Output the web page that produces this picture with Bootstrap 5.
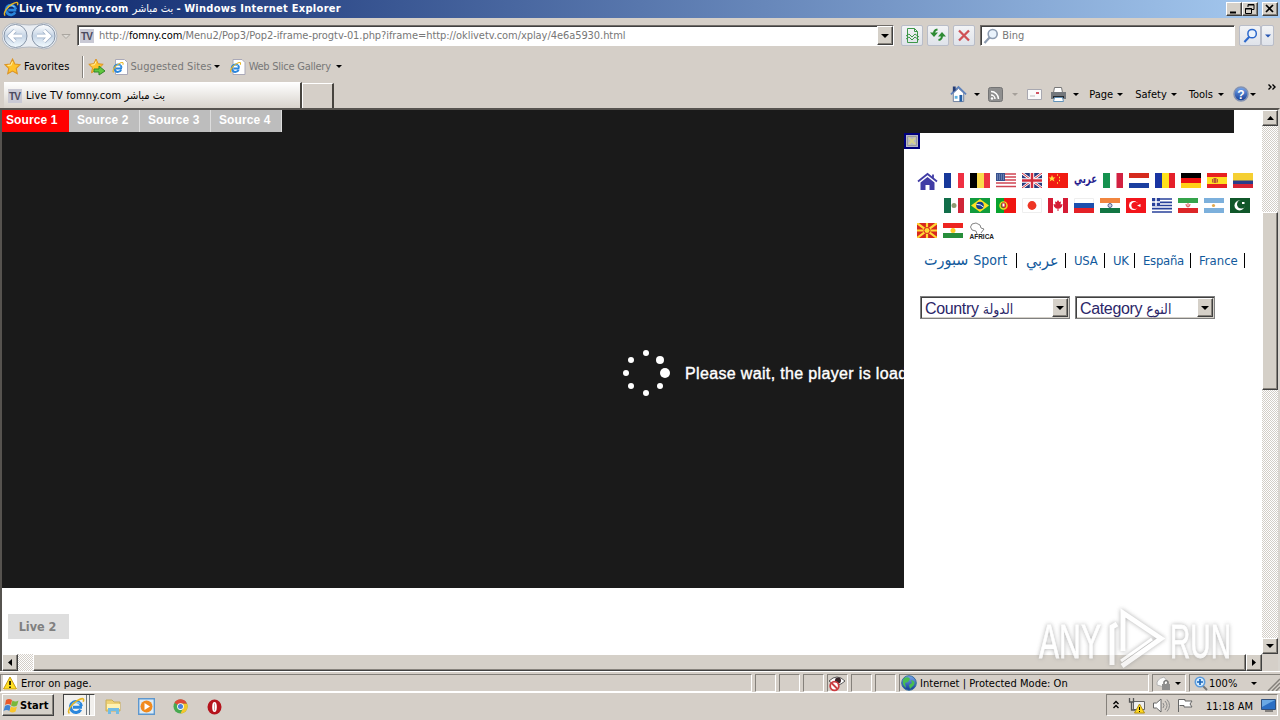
<!DOCTYPE html>
<html lang="en">
<head>
  <meta charset="UTF-8" />
  <title>Live TV fomny.com</title>
  <link href="https://cdn.jsdelivr.net/npm/bootstrap@5.3.0/dist/css/bootstrap.min.css" rel="stylesheet" />
  <style>
    body {
      width: 1280px;
      height: 720px;
      overflow: hidden;
      background-color: #d5cfc8;
      color: #000;
      font-family: "DejaVu Sans Condensed", "DejaVu Sans", sans-serif;
      font-stretch: condensed;
      font-size: 11px;
      line-height: 14px;
      white-space: nowrap;
    }
    svg { flex: none; display: block; }
    .defs { position: absolute; }

    /* title bar */
    .titlebar {
      height: 18px;
      background: linear-gradient(90deg, #0a246a, #a6caf0);
      color: #fff;
      padding: 0 2px 0 3px;
    }
    .title-text { font-weight: bold; letter-spacing: 0.29px; }
    .title-text span { font-weight: normal; }
    .raised {
      background-color: #d5d0c8;
      border: 1px solid;
      border-color: #fff #404040 #404040 #fff;
      box-shadow: inset -1px -1px 0 #87837c;
      color: #000;
    }
    .win-btn { width: 16px; height: 14px; }

    /* address row */
    .nav-row { height: 35px; padding: 0 6px 0 2px; }
    .sunken {
      background-color: #fff;
      border: 1px solid;
      border-color: #706c68 #fff #fff #706c68;
      box-shadow: inset 1px 1px 0 #404040;
    }
    .address { width: 818px; height: 21px; color: #777; }
    .url { letter-spacing: -0.065px; padding-left: 1px; padding-top: 1px; }
    .url b { font-weight: normal; color: #000; }
    .nav-btn {
      width: 22px;
      height: 21px;
      background: linear-gradient(#f2f3f5, #dfe3ea);
      border: 1px solid #b9bdc8;
      border-radius: 2px;
    }
    .bing { width: 255px; height: 21px; color: #777; }
    .fav-row { height: 26px; padding: 1px 0 0 4px; }
    .fav-row .dim { color: #777; letter-spacing: 0.08px; }
    .fav-row .slices { letter-spacing: -0.25px; }
    .sep { width: 2px; height: 22px; border-left: 1px solid #85817b; border-right: 1px solid #fff; }

    /* tabs and command bar */
    .tab-row { height: 29px; padding-left: 4px; }
    .page-tab {
      width: 298px;
      height: 26px;
      background: linear-gradient(#fefefe, #d8d3cc);
      border-right: 2px solid #47443f;
      border-top: 1px solid #fff;
      padding-left: 4px;
    }
    .page-tab span { padding-top: 1px; letter-spacing: 0.11px; }
    .new-tab { width: 32px; height: 25px; border: 1px solid #fff; border-right: 2px solid #47443f; border-bottom: 0; }
    .cmd { height: 28px; }
    .cmd span { padding-top: 1px; }

    /* viewport */
    .frame { height: 563px; border-top: 2px solid #56534f; border-left: 2px solid #56534f; border-right: 2px solid #d8d4ce; }
    .viewport { width: 1260px; height: 544px; background-color: #fff; position: relative; overflow: hidden; }
    .player { width: 1232px; height: 478px; background-color: #1a1a1a; color: #fff; font-family: "Liberation Sans", sans-serif; }
    .source {
      height: 22px;
      width: 71px;
      background-color: #bdbdbd;
      border-right: 1px solid #ddd;
      font: bold 12px/20px "Liberation Sans", sans-serif;
      letter-spacing: 0.1px;
      padding-left: 8px;
    }
    .source.on { width: 67px; background-color: #f00; padding-left: 4px; border: 0; }
    .wait { padding: 216px 0 0 619px; font-size: 16px; letter-spacing: 0.35px; -webkit-text-stroke: 0.4px #fff; }
    .wait span { padding: 2px 0 0 14px; }
    .live-btn { width: 61px; height: 25px; margin: 26px 0 0 6px; background-color: #dedede; color: #808080; font: bold 12.5px/25px "DejaVu Sans Condensed", sans-serif; padding-right: 2px; }
    .side-panel { position: absolute; left: 902px; top: 23px; width: 358px; height: 521px; background-color: #fff; }
    .close-box { width: 16px; height: 16px; border: 2px solid #00007c; background-color: #b7b7c3; }
    .flags { gap: 6px; height: 25px; }
    .links { height: 22px; color: #125a9c; font-size: 13px; letter-spacing: -0.3px; }
    .links i { width: 1px; height: 15px; background-color: #000; }
    .links a { color: #125a9c; text-decoration: none; padding-top: 1px; }
    .links .sport { width: 92px; font-size: 14px; letter-spacing: 0; word-spacing: 1px; padding-top: 0; }
    .links .sport span { font-size: 16px; }
    .links .arabic { width: 48px; padding-left: 9px; font-size: 16px; }
    .pick {
      height: 23px;
      border: 1px solid #808080;
      box-shadow: inset 1px 1px 0 #404040, inset -1px -1px 0 #d4d0c8;
      color: #2b2668;
      font: 16px/21px "Liberation Sans", "DejaVu Sans", sans-serif;
      padding: 1px 1px 1px 4px;
      letter-spacing: -0.35px;
    }
    .pick span { font-family: "DejaVu Sans Condensed", sans-serif; font-size: 14px; line-height: 1; }
    .track { background: repeating-conic-gradient(#fff 0 25%, #d3cec7 0 50%) 0 0 / 2px 2px; }
    .vscroll { width: 16px; }
    .hscroll { height: 17px; }

    /* status bar */
    .status { height: 21px; gap: 3px; padding-top: 2px; border-top: 1px solid #fff; }
    .pane { height: 18px; width: 21px; border: 1px solid; border-color: #85817b #fff #fff #85817b; flex: none; }
    .pane span { padding-top: 1px; }
    .zone { letter-spacing: 0.03px; }

    /* taskbar */
    .taskbar { height: 27px; border-top: 1px solid #fff; padding: 1px 2px 0; }
    .start { width: 52px; height: 22px; font-weight: bold; letter-spacing: 0.1px; }
    .start span { padding-top: 2px; }
    .quick { width: 32px; height: 22px; background-color: #f2f0ed; border: 1px solid; border-color: #404040 #fff #fff #404040; }
    .tray { width: 172px; height: 22px; border: 1px solid; border-color: #85817b #fff #fff #85817b; }
    .clock { margin-left: 12px; padding-top: 3px; }
    .watermark { position: absolute; left: 1030px; top: 604px; filter: drop-shadow(0 0 2px #999); opacity: .8; }
  </style>
</head>
<body class="d-flex flex-column">
  <svg class="defs" width="0" height="0">
    <defs>
      <linearGradient id="round" x2="0" y2="1"><stop stop-color="#fff" /><stop offset=".5" stop-color="#c6d5e6" /><stop offset="1" stop-color="#f3fbff" /></linearGradient>
      <linearGradient id="blue" x2="0" y2="1"><stop stop-color="#79a8ee" /><stop offset="1" stop-color="#123a94" /></linearGradient>
      <symbol id="ie" viewBox="0 0 16 16">
        <path d="M13.3 9.2H5.2M12.8 8.2A4.9 4.9 0 1 0 12.2 11.4" fill="none" stroke="#2a86dc" stroke-width="2.7" />
        <path d="M4.500 6.800A4.500 4.500 0 0 1 11.500 6" fill="none" stroke="#7fcbf8" stroke-width="1.200" />
        <path d="M2.2 14.6C-.4 12.5 4 6 9 3.2S15.6 1 14.4 4.3" fill="none" stroke="#e7b521" stroke-width="1.4" />
      </symbol>
      <symbol id="iepage" viewBox="0 0 16 16">
        <path d="M3.5.5h9l3 3v12h-12z" fill="#fff" stroke="#aaa9b8" />
        <use href="#ie" x="0" y="2.5" width="12" height="12" />
      </symbol>
      <symbol id="star" viewBox="0 0 16 16"><path d="M8 1l2.2 4.7 5 .6-3.7 3.5 1 5L8 12.3l-4.5 2.5 1-5L.8 6.3l5-.6z" fill="#ffc32c" stroke="#dc9424" /><path d="M8 3.4L6.5 6.7l-3.2.4" fill="none" stroke="#fff0a8" /></symbol>
      <symbol id="down" viewBox="0 0 6 3"><path d="M0 0h6L3 3z" fill="currentColor" /></symbol>
      <symbol id="lens" viewBox="0 0 16 16"><path d="M7 9L1.500 15" stroke="currentColor" stroke-width="2.2" /><circle cx="9.7" cy="6" r="4.5" fill="#eaf3fc" stroke="currentColor" stroke-width="1.6" /></symbol>
      <symbol id="tvicon" viewBox="0 0 14 14"><path d="M0 0h14v14H0z" fill="#c9c9d4" /><text x="7" y="11" text-anchor="middle" font-family="Liberation Sans" font-weight="bold" font-size="10" textLength="12" fill="#4a4a5e">TV</text></symbol>
    </defs>
  </svg>

  <div class="titlebar d-flex align-items-center flex-shrink-0">
    <svg width="16" height="16"><use href="#ie" /></svg>
    <div class="title-text flex-grow-1">Live TV fomny.com <span>بث مباشر</span> - Windows Internet Explorer</div>
    <div class="raised win-btn"><svg width="14" height="12"><path d="M3 9.5h6" stroke="#000" stroke-width="2" /></svg></div>
    <div class="raised win-btn me-1"><svg width="14" height="12"><path d="M5 4V1.5h6v5H9M5 2h6M2.5 5.5h6v5h-6zM2 6h7" fill="none" stroke="#000" /></svg></div>
    <div class="raised win-btn"><svg width="14" height="12"><path d="M3 2l7 7M10 2L3 9" stroke="#000" stroke-width="1.7" /></svg></div>
  </div>

  <div class="nav-row d-flex align-items-center flex-shrink-0">
    <svg width="75" height="30" viewBox="0 0 75 30">
      <path d="M13 2Q27 6 42 2a13 13 0 0 1 0 26Q27 24 13 28a13 13 0 0 1 0-26" fill="#e9edf2" stroke="#b4b9c0" />
      <circle cx="13.5" cy="15" r="11.5" fill="url(#round)" stroke="#8795a8" />
      <circle cx="41.500" cy="15" r="11.5" fill="url(#round)" stroke="#8795a8" />
      <path d="M20 15H8M13 9.500L7.500 15l5.500 5.500M35 15h12M42 9.500l5.500 5.500-5.500 5.500" fill="none" stroke="#9dafc6" stroke-width="4.500" />
      <path d="M20 15H8M13 9.500L7.500 15l5.500 5.500M35 15h12M42 9.500l5.500 5.500-5.500 5.500" fill="none" stroke="#fff" stroke-width="3" />
      <path d="M60 13.500h8l-4 4z" fill="#dedbd6" stroke="#aaa6a0" />
    </svg>
    <div class="sunken address d-flex align-items-center">
      <svg style="margin: 0 4px 0 2px" width="14" height="14"><use href="#tvicon" /></svg>
      <div class="url flex-grow-1">http://<b>fomny.com</b>/Menu2/Pop3/Pop2-iframe-progtv-01.php?iframe=http://oklivetv.com/xplay/4e6a5930.html</div>
      <div class="raised h-100 d-flex align-items-center justify-content-center win-btn"><svg width="8" height="4"><use href="#down" /></svg></div>
    </div>
    <div class="d-flex ms-1" style="gap: 4px; padding-left: 3px">
      <div class="nav-btn"><svg width="20" height="19"><path d="M5.500 2.500h7l3 3v11h-10zM12.500 2.500v3h3M4 10l3-2 3 3 3-3 4 3M4 13l3-2 3 3 3-3 4 3" fill="none" stroke="#3c9748" /></svg></div>
      <div class="nav-btn"><svg width="20" height="19"><path d="M9.500 3.500Q6 4 6 7.500M10.500 14q3.500-.5 3.500-4.500" fill="none" stroke="#2e8b34" stroke-width="2" /><path d="M2 6.500h8L6 11zM10 10.500h8L14 6z" fill="#2e8b34" /></svg></div>
      <div class="nav-btn"><svg width="20" height="19"><path d="M5 4.500l10 10M15 4.500l-10 10" stroke="#cf5156" stroke-width="2.300" /></svg></div>
    </div>
    <div class="sunken bing d-flex align-items-center me-1" style="margin-left: 5px">
      <svg style="margin-left: 2px" width="16" height="16" color="#8d9cb1"><use href="#lens" /></svg>
      <span style="padding: 1px 0 0 3px">Bing</span>
    </div>
    <div class="nav-btn ms-auto d-flex align-items-center justify-content-center"><svg width="15" height="15" color="#2d69cc"><use href="#lens" /></svg></div>
    <div class="nav-btn d-flex align-items-center justify-content-center" style="width: 13px"><svg width="6" height="4" color="#2756b2"><use href="#down" /></svg></div>
  </div>

  <div class="fav-row d-flex align-items-center flex-shrink-0">
    <svg width="17" height="17"><use href="#star" /></svg>
    <span style="margin-left: 3px; letter-spacing: 0.1px">Favorites</span>
    <div class="sep" style="margin: 0 4px 0 12px"></div>
    <svg width="18" height="18" viewBox="0 0 18 18"><use href="#star" width="16" height="16" /><path d="M6 11h5V8l6 5-6 4v-3H6z" fill="#60c83e" stroke="#33872a" /></svg>
    <svg style="margin: 0 3px 0 6px" width="16" height="16"><use href="#iepage" /></svg>
    <span class="dim">Suggested Sites</span>
    <svg style="margin-left: 2px" width="6" height="3"><use href="#down" /></svg>
    <svg style="margin: 0 3px 0 9px" width="17" height="16"><use href="#iepage" /></svg>
    <span class="dim slices">Web Slice Gallery</span>
    <svg style="margin-left: 5px" width="6" height="3"><use href="#down" /></svg>
  </div>

  <div class="tab-row d-flex align-items-end flex-shrink-0">
    <div class="page-tab d-flex align-items-center">
      <svg class="me-1" width="14" height="14"><use href="#tvicon" /></svg>
      <span>Live TV fomny.com بث مباشر</span>
    </div>
    <div class="new-tab"></div>
    <div class="cmd d-flex align-items-center ms-auto">
      <svg width="17" height="18" viewBox="0 0 18 18"><path d="M3.500 8v9h11V8L9 3z" fill="#fff" stroke="#6a7c9c" /><path d="M1 9.500l8-8 8 8" fill="none" stroke="#5c80bb" stroke-width="1.800" /><path d="M3 1h3v4L3 7z" fill="#243c75" /><path d="M10 10h3v7h-3z" fill="#235fa6" /><path d="M5 11h3v3H5z" fill="#5fb1df" /></svg>
      <svg style="margin: 0 8px 0 7px" width="6" height="3"><use href="#down" /></svg>
      <svg width="15" height="15"><rect x=".5" y=".5" width="14" height="14" rx="2" fill="#8f8f8f" stroke="#747474" /><path d="M3 8a4 4 0 0 1 4 4M3 4.500a7.500 7.500 0 0 1 7.500 7.500" fill="none" stroke="#fff" stroke-width="1.500" /><circle cx="4" cy="11.500" r="1.200" fill="#fff" /></svg>
      <svg width="6" height="3" color="#a5a09a" style="margin: 0 9px"><use href="#down" /></svg>
      <svg width="15" height="11"><path d="M.5.5h14v10H.5z" fill="#fafafa" stroke="#a8a8b0" /><path d="M9 3h3v2H9z" fill="#d05463" /><path d="M3 7h5" stroke="#bbb" /></svg>
      <svg style="margin-left: 8px" width="17" height="17"><path d="M4.500 1.500h7l1 5h-9z" fill="#fff" stroke="#777" /><path d="M1 6h15v7H1z" fill="#73777c" /><path d="M3 10h11v2H3z" fill="#252a30" /><path d="M4.500 11.500h8l1 4h-10z" fill="#fff" stroke="#6192b9" /></svg>
      <svg style="margin: 0 10px 0 6px" width="6" height="3"><use href="#down" /></svg>
      <span>Page</span><svg style="margin: 0 12px 0 4px" width="6" height="3"><use href="#down" /></svg>
      <span>Safety</span><svg style="margin: 0 12px 0 4px" width="6" height="3"><use href="#down" /></svg>
      <span>Tools</span><svg style="margin: 0 9px 0 5px" width="6" height="3"><use href="#down" /></svg>
      <svg width="16" height="16"><circle cx="8" cy="8" r="7" fill="url(#blue)" stroke="#8492b1" stroke-width="1.500" /><text x="8" y="12.500" text-anchor="middle" font-family="Liberation Sans" font-size="12" font-weight="bold" fill="#fff">?</text></svg>
      <svg style="margin: 0 12px 0 1px" width="6" height="3"><use href="#down" /></svg>
      <svg class="align-self-start mt-1" width="8" height="7" style="margin-right: 4px"><path d="M.5.500L3 3 .5 5.500M4.500.500L7 3 4.500 5.500" fill="none" stroke="#000" stroke-width="1.400" /></svg>
    </div>
  </div>

  <div class="frame d-flex flex-shrink-0">
    <div>
      <div class="viewport">
        <div class="player">
          <div class="d-flex">
            <div class="source on">Source 1</div>
            <div class="source">Source 2</div>
            <div class="source">Source 3</div>
            <div class="source">Source 4</div>
          </div>
          <div class="wait d-flex align-items-center">
            <svg width="50" height="50" viewBox="0 0 50 50" fill="#fff" stroke="none"><circle cx="25" cy="5" r="3" /><circle cx="39" cy="12" r="4" /><circle cx="44" cy="25" r="5" /><circle cx="39" cy="38" r="3" /><circle cx="25" cy="45" r="3" /><circle cx="10" cy="38" r="3" /><circle cx="5" cy="25" r="3" /><circle cx="10" cy="12" r="3" /></svg>
            <span>Please wait, the player is loading</span>
          </div>
        </div>
        <div class="live-btn text-center">Live 2</div>

        <div class="side-panel">
          <div class="close-box"><svg width="12" height="12"><path d="M1.500 1.500h9v9h-9z" fill="none" stroke="#999" /><path d="M3 3l6 6M9 3L3 9" stroke="#d6d28c" stroke-width="2" /></svg></div>
          <div class="flags d-flex align-items-center" style="margin: 19px 0 0 13px">
            <svg width="21" height="19" viewBox="0 0 21 19"><path d="M3.500 11.500L10.500 6l7 5.500V19h-5v-5h-4v5h-5z" fill="#403ca5" /><path d="M1 10.500L10.500 3 20 10.500M16 3.500v4" fill="none" stroke="#403ca5" stroke-width="1.800" /></svg>
            <svg width="20" height="15"><path d="M0 0h7v15H0z" fill="#17389a" /><path d="M7 0h7v15H7z" fill="#fff" /><path d="M14 0h6v15h-6z" fill="#ef3042" /></svg>
            <svg width="20" height="15"><path d="M0 0h7v15H0z" fill="#000" /><path d="M7 0h7v15H7z" fill="#fadb4c" /><path d="M14 0h6v15h-6z" fill="#ed3340" /></svg>
            <svg width="20" height="15"><path d="M0 0h20v15H0z" fill="#fff" /><path d="M0 1h20M0 4h20M0 7h20M0 10h20M0 13.500h20" stroke="#cf4453" stroke-width="1.500" /><path d="M0 0h9v8H0z" fill="#37518e" /><path d="M1 2h7M1 4h7M1 6h7" stroke="#9aabd0" stroke-dasharray="1 1" /></svg>
            <svg width="20" height="15"><path d="M0 0h20v15H0z" fill="#273a7c" /><path d="M0 0l20 15M20 0L0 15" stroke="#fff" stroke-width="2.600" /><path d="M0 0l20 15M20 0L0 15" stroke="#d12d3c" /><path d="M10 0v15M0 7.500h20" stroke="#fff" stroke-width="4.400" /><path d="M10 0v15M0 7.500h20" stroke="#d12d3c" stroke-width="2.500" /></svg>
            <svg width="20" height="15"><path d="M0 0h20v15H0z" fill="#f11b12" /><path d="M4 2l1 2.500h2.500l-2 1.500 1 2.500L4 7 1.500 8.500l1-2.500-2-1.500H3z" fill="#ffe03c" /><path d="M9 2h1M11 4.500h1M11 7.500h1M9 10h1" stroke="#ffe03c" stroke-width="1.500" /></svg>
            <svg class="overflow-visible" width="23" height="21" viewBox="0 0 23 21"><text x="11.500" y="13" text-anchor="middle" font-family="DejaVu Sans" font-size="13" font-weight="bold" textLength="23" lengthAdjust="spacingAndGlyphs" fill="#271d8e">عربي</text></svg>
            <svg width="20" height="15"><path d="M0 0h7v15H0z" fill="#15924f" /><path d="M7 0h7v15H7z" fill="#fff" /><path d="M13.500 0H20v15h-6.500z" fill="#d22141" /></svg>
            <svg width="20" height="15"><path d="M0 0h20v5H0z" fill="#d52b1e" /><path d="M0 5h20v5H0z" fill="#fff" /><path d="M0 10h20v5H0z" fill="#1b3fa0" /></svg>
            <svg width="20" height="15"><path d="M0 0h7v15H0z" fill="#1934a2" /><path d="M7 0h7v15H7z" fill="#ffe21b" /><path d="M14 0h6v15h-6z" fill="#e5202a" /></svg>
            <svg width="20" height="15"><path d="M0 0h20v5H0z" fill="#000" /><path d="M0 5h20v5H0z" fill="#ed1111" /><path d="M0 10h20v5H0z" fill="#ffd117" /></svg>
            <svg width="20" height="15"><path d="M0 0h20v15H0z" fill="#e82220" /><path d="M0 4h20v7H0z" fill="#ffdf21" /><path d="M5 6h1v3.500H5zM6.500 5h3v5h-3zM10 6h1v3.500h-1z" fill="#b75835" /></svg>
            <svg width="20" height="15"><path d="M0 0h20v8H0z" fill="#f5cf32" /><path d="M0 7.500h20v4H0z" fill="#283c8b" /><path d="M0 11h20v4H0z" fill="#d52334" /></svg>
          </div>
          <div class="flags d-flex align-items-center" style="margin-left: 40px">
            <svg width="20" height="15"><path d="M0 0h7v15H0z" fill="#116e4a" /><path d="M7 0h7v15H7z" fill="#fff" /><path d="M14 0h6v15h-6z" fill="#cf2538" /><circle cx="10" cy="7.500" r="2.500" fill="#8e9a72" /></svg>
            <svg width="20" height="15"><path d="M0 0h20v15H0z" fill="#119b3d" /><path d="M10 1l9 6.500-9 6.500-9-6.500z" fill="#fde323" /><circle cx="10" cy="7.500" r="3.800" fill="#153e91" /><path d="M6.500 6.500q4-.5 7 2.500" stroke="#fff" fill="none" /></svg>
            <svg width="20" height="15"><path d="M0 0h8v15H0z" fill="#08a32e" /><path d="M8 0h12v15H8z" fill="#f01611" /><circle cx="7.500" cy="7.500" r="3.500" fill="none" stroke="#eadd24" stroke-width="1.500" /><path d="M6 5h3v4H6z" fill="#fff" stroke="#cb2b2b" /></svg>
            <svg width="20" height="15"><path d="M.5.500h19v14H.5z" fill="#fff" stroke="#eee" /><circle cx="10" cy="7.500" r="4.400" fill="#ee3524" /></svg>
            <svg width="20" height="15"><path d="M0 0h20v15H0z" fill="#fff" /><path d="M0 0h5v15H0zM15 0h5v15h-5zM10 2l1.300 2L13 3.500l-.5 3 2-.5-.5 2.500-2 2h-1.500V13h-1v-2.500H8L6 8.500 5.500 6l2 .5-.500-3L8.700 4z" fill="#d51c35" /></svg>
            <svg width="20" height="15"><path d="M.5.500h19v5H.5z" fill="#fff" stroke="#eee" /><path d="M0 5h20v5H0z" fill="#1c4fae" /><path d="M0 10h20v5H0z" fill="#e42127" /></svg>
            <svg width="20" height="15"><path d="M0 0h20v5H0z" fill="#f1863f" /><path d="M0 5h20v5H0z" fill="#fff" /><path d="M0 10h20v5H0z" fill="#127643" /><circle cx="10" cy="7.500" r="2" fill="#ccd" stroke="#53638f" /></svg>
            <svg width="20" height="15"><path d="M0 0h20v15H0z" fill="#f3151b" /><circle cx="7.500" cy="7.500" r="4.500" fill="#fff" /><circle cx="9" cy="7.500" r="3.600" fill="#f3151b" /><path d="M11 7.500l3.500-1.500v3z" fill="#fff" /></svg>
            <svg width="20" height="15"><path d="M0 0h20v15H0z" fill="#fff" /><path d="M0 1h20M0 4.300h20M0 7.500h20M0 10.700h20M0 14h20" stroke="#29429b" stroke-width="1.700" /><path d="M0 0h8v8H0z" fill="#29429b" /><path d="M4 0v8M0 4h8" stroke="#fff" stroke-width="1.500" /></svg>
            <svg width="20" height="15"><path d="M0 0h20v5H0z" fill="#35a34b" /><path d="M0 5h20v5H0z" fill="#fff" /><path d="M0 10h20v5H0z" fill="#dc2627" /><path d="M8 6q0 3 2 3t2-3M10 5v4" fill="none" stroke="#dc5759" /></svg>
            <svg width="20" height="15"><path d="M0 0h20v5H0zM0 10h20v5H0z" fill="#7cb0dc" /><path d="M0 5h20v5H0z" fill="#fff" /><circle cx="9.500" cy="7.500" r="1.600" fill="#e1a84c" /></svg>
            <svg width="20" height="15"><path d="M0 0h20v15H0z" fill="#10572a" /><circle cx="9.500" cy="7.500" r="5" fill="#fff" /><circle cx="11.300" cy="6.300" r="4.300" fill="#10572a" /><path d="M12 4h2.500v2H12z" fill="#fff" /></svg>
          </div>
          <div class="flags d-flex align-items-center" style="margin-left: 13px">
            <svg width="20" height="15"><path d="M0 0h20v15H0z" fill="#d8281d" /><path d="M0 0l20 15M20 0L0 15M10 0v15M0 7.500h20" stroke="#ffd836" stroke-width="2.200" /><circle cx="10" cy="7.500" r="3" fill="#ffd836" stroke="#d8281d" /></svg>
            <svg width="20" height="15"><path d="M0 0h20v5H0z" fill="#ed2420" /><path d="M0 5h20v5H0z" fill="#fff" /><path d="M0 10h20v5H0z" fill="#278e3b" /><circle cx="10" cy="7.500" r="2.500" fill="#fdcd26" /></svg>
            <svg class="overflow-visible" width="28" height="20" viewBox="0 0 28 20"><path d="M3 3l4-1 4 2 1 3 3 1-3 4M3 3L1.500 6 3 9l4 1 1 3" fill="none" stroke="#666" stroke-width=".8" /><text x="0.500" y="18" font-family="Liberation Sans" font-weight="bold" font-size="8" textLength="24.500" lengthAdjust="spacingAndGlyphs" fill="#222">AFRICA</text></svg>
          </div>
          <div class="links d-flex align-items-center" style="margin: 6px 0 0 20px">
            <a class="sport" href="#"><span>سبورت</span> Sport</a><i></i>
            <a class="arabic" href="#">عربي</a><i></i>
            <a style="width: 38px; padding-left: 8px" href="#">USA</a><i></i>
            <a style="width: 29px; padding-left: 8px" href="#">UK</a><i></i>
            <a style="width: 55px; padding-left: 8px" href="#">España</a><i></i>
            <a style="width: 53px; padding-left: 8px; letter-spacing: 0" href="#">France</a><i></i>
          </div>
          <div class="d-flex" style="margin: 25px 0 0 16px; gap: 5px">
            <div class="pick d-flex" style="width: 150px"><div class="flex-grow-1">Country <span>الدولة</span></div><div class="raised d-flex align-items-center justify-content-center win-btn h-100"><svg width="8" height="4"><use href="#down" /></svg></div></div>
            <div class="pick d-flex" style="width: 140px"><div class="flex-grow-1">Category <span>النوع</span></div><div class="raised d-flex align-items-center justify-content-center win-btn h-100"><svg width="8" height="4"><use href="#down" /></svg></div></div>
          </div>
        </div>
      </div>
      <div class="hscroll d-flex">
        <div class="raised win-btn h-100 d-flex align-items-center justify-content-center"><svg width="4" height="7"><path d="M4 0v7L0 3.500z" /></svg></div>
        <div class="track" style="width: 15px"></div>
        <div class="raised flex-grow-1"></div>
        <div class="raised win-btn h-100 d-flex align-items-center justify-content-center"><svg width="4" height="7"><path d="M0 0v7l4-3.500z" /></svg></div>
      </div>
    </div>
    <div class="vscroll track d-flex flex-column">
      <div class="raised w-100 d-flex align-items-center justify-content-center" style="height: 16px"><svg width="7" height="4"><path d="M0 4h7L3.500 0z" /></svg></div>
      <div class="raised w-100" style="height: 178px; margin-top: 86px"></div>
      <div class="raised w-100 d-flex align-items-center justify-content-center mt-auto" style="height: 16px"><svg width="8" height="4"><use href="#down" /></svg></div>
      <div style="height: 17px; background-color: #d5cfc8"></div>
    </div>
  </div>

  <div class="status d-flex flex-shrink-0">
    <div class="pane d-flex align-items-center" style="width: 752px">
      <svg style="margin: 0 3px 0 1px" width="16" height="16"><path d="M1 0h14v15H1z" fill="#fff" /><path d="M8 2l6.500 12h-13z" fill="#ffdf20" stroke="#c69a16" /><path d="M8 6v4M8 11.500V13" stroke="#000" stroke-width="1.600" /></svg>
      <span>Error on page.</span>
    </div>
    <div class="pane"></div>
    <div class="pane"></div>
    <div class="pane"></div>
    <div class="pane"><svg width="18" height="17"><path d="M1 6q8-8 16 0-8 8-16 0" fill="#fff" stroke="#555" /><circle cx="10" cy="5.500" r="3" fill="#39272b" /><circle cx="6.500" cy="11" r="4.300" fill="#fff" stroke="#cb3c40" stroke-width="1.800" /><path d="M3.500 8l6 6" stroke="#cb3c40" stroke-width="1.800" /></svg></div>
    <div class="pane"></div>
    <div class="pane"></div>
    <div class="pane d-flex align-items-center" style="width: 250px">
      <svg style="margin: 0 3px 0 1px" width="16" height="16"><circle cx="8" cy="8" r="7.300" fill="url(#blue)" stroke="#346e9e" /><path d="M3 3q5-2 6 1L7 7 4 8l1 5Q0 9 3 3M10 5q5 1 3 5l-4 4-1-4 3-2z" fill="#48bd51" /></svg>
      <span class="zone">Internet | Protected Mode: On</span>
    </div>
    <div class="pane d-flex align-items-center" style="width: 34px">
      <svg style="margin-left: 3px" width="16" height="15"><path d="M1 9Q0 3 8 1l4 5-4 5z" fill="#fafafa" stroke="#b3b3b3" /><path d="M8 8V6q2-3 4 0v2" fill="none" stroke="#777" stroke-width="1.500" /><path d="M6 8h8v6H6z" fill="#8e8e8e" /></svg>
      <svg style="margin-left: 3px" width="6" height="3"><use href="#down" /></svg>
    </div>
    <div class="pane d-flex align-items-center flex-grow-1" style="border-right: 0">
      <svg style="margin: 0 1px 0 4px" width="14" height="15"><path d="M8 9l5 5" stroke="#777" stroke-width="2" /><circle cx="6" cy="6" r="4.700" fill="#d7edff" stroke="#5b9bdc" stroke-width="1.600" /><path d="M3 6h6M6 3v6" stroke="#1b66ba" stroke-width="1.700" /></svg>
      <span>100%</span>
      <svg style="margin-left: 14px" width="6" height="3"><use href="#down" /></svg>
      <svg class="ms-auto align-self-end" width="13" height="13"><path d="M1 13L13 1M5 13l8-8M9 13l4-4" stroke="#85817b" stroke-width="1.500" /></svg>
    </div>
  </div>

  <div class="taskbar d-flex flex-shrink-0">
    <div class="raised start d-flex align-items-center">
      <svg width="17" height="17" viewBox="0 0 17 17"><path d="M3 3q3-2 6 0L8 8Q5 6 2 8z" fill="#e9582b" /><path d="M9.500 3.500q3 2 6 0L14 8.500q-3 2-6 0z" fill="#79b83c" /><path d="M2 9q3-2 5.500 0L6.500 14q-3-2-6 0z" fill="#3f83d4" /><path d="M8 9.500q3 2 6 0L12.500 14.500q-3 2-6 0z" fill="#fac52a" /></svg>
      <span>Start</span>
    </div>
    <div class="quick d-flex" style="margin-left: 9px"><svg style="margin: 2px 0 0 3px" width="18" height="18"><use href="#ie" /></svg><i class="ms-auto me-1 border-start border-end border-secondary" style="width: 4px"></i></div>
    <svg style="margin: 4px 0 0 10px" width="17" height="17"><path d="M1 2h6l2 2h6v9H1z" fill="#efd276" stroke="#c9ad59" /><path d="M2 6h13v5H2z" fill="#fff2b2" /><path d="M3 10h11v6h-3v-3H6v3H3z" fill="#72bce4" /></svg>
    <svg style="margin: 4px 0 0 16px" width="17" height="17"><path d="M.7.700h15.600v15.600H.7z" fill="#dcecf8" stroke="#5d97ce" stroke-width="1.400" /><circle cx="8.500" cy="8.500" r="6" fill="#f18a1d" /><path d="M6.500 5l5.500 3.500L6.500 12z" fill="#fff" /></svg>
    <svg style="margin: 5px 0 0 18px" width="15" height="15" viewBox="0 0 16 16"><circle cx="8" cy="8" r="7.500" fill="#48a950" /><path d="M8 8L1.500 4A7.500 7.500 0 0 1 15 5H8z" fill="#df4938" /><path d="M8 5h7A7.500 7.500 0 0 1 8 15.500L11 9z" fill="#f5c72c" /><circle cx="8" cy="8" r="3.600" fill="#fff" /><circle cx="8" cy="8" r="2.700" fill="#4b83dc" /></svg>
    <svg style="margin: 5px 0 0 19px" width="15" height="16"><ellipse cx="7.500" cy="8" rx="7" ry="7.500" fill="#b5131c" /><ellipse cx="7.500" cy="8" rx="2.300" ry="5" fill="#fff" /><path d="M7.500 4.500v7" stroke="#d7a2a2" /></svg>
    <div class="tray d-flex align-items-center ms-auto">
      <svg style="margin: 0 8px 0 6px" width="7" height="10"><path d="M.5 4l2.500-2.500L5.500 4M.5 8l2.500-2.500L5.500 8" fill="none" stroke="#000" stroke-width="1.400" /></svg>
      <svg width="18" height="17"><path d="M5.500 4.500h11v8h-11z" fill="#eee" stroke="#666" /><path d="M1.500 1v4h4V1M3.500 5v8h4" fill="none" stroke="#555" stroke-width="1.300" /><path d="M11.500 7l5 9h-10z" fill="#ffd91f" stroke="#b38f16" /><path d="M11.500 10v3M11.500 14v1" stroke="#000" /></svg>
      <svg style="margin-left: 7px" width="17" height="15"><path d="M.5 5h3L8 1v13l-4.500-4h-3z" fill="#fff" stroke="#666" /><path d="M10 5q2 2.500 0 5M12 3q4 4.500 0 9M14 1.500q5 6 0 12" fill="none" stroke="#888" /></svg>
      <svg style="margin-left: 7px" width="17" height="15"><path d="M1.500 14V1.500H8v1.500h7l-2 3 2 3H7V7.500H2.500" fill="#fff" stroke="#666" /></svg>
      <span class="clock">11:18 AM</span>
      <svg class="ms-auto" style="margin-right: 1px" width="15" height="14"><path d="M.5 1.500h14v10H.5z" fill="#2b6fc4" stroke="#31507c" /><path d="M1 2h13L1 9z" fill="#6aa9e4" /><path d="M4 13h8" stroke="#333" /></svg>
    </div>
  </div>

  <svg class="watermark" width="230" height="76" viewBox="0 0 230 76" fill="none" stroke="#fff">
    <g fill="#fff" stroke-width=".8" font-family="Liberation Sans" font-size="49">
      <text x="9" y="54" textLength="62" lengthAdjust="spacingAndGlyphs">ANY</text>
      <text x="140" y="54" textLength="61" lengthAdjust="spacingAndGlyphs">RUN</text>
    </g>
    <path d="M82 61V23l5-3M93 47V9l38 25.500L92 62" stroke-width="5" />
    <path d="M91 57l31-22" stroke-width="3" />
  </svg>

  <script src="https://cdn.jsdelivr.net/npm/bootstrap@5.3.0/dist/js/bootstrap.bundle.min.js"></script>
</body>
</html>
